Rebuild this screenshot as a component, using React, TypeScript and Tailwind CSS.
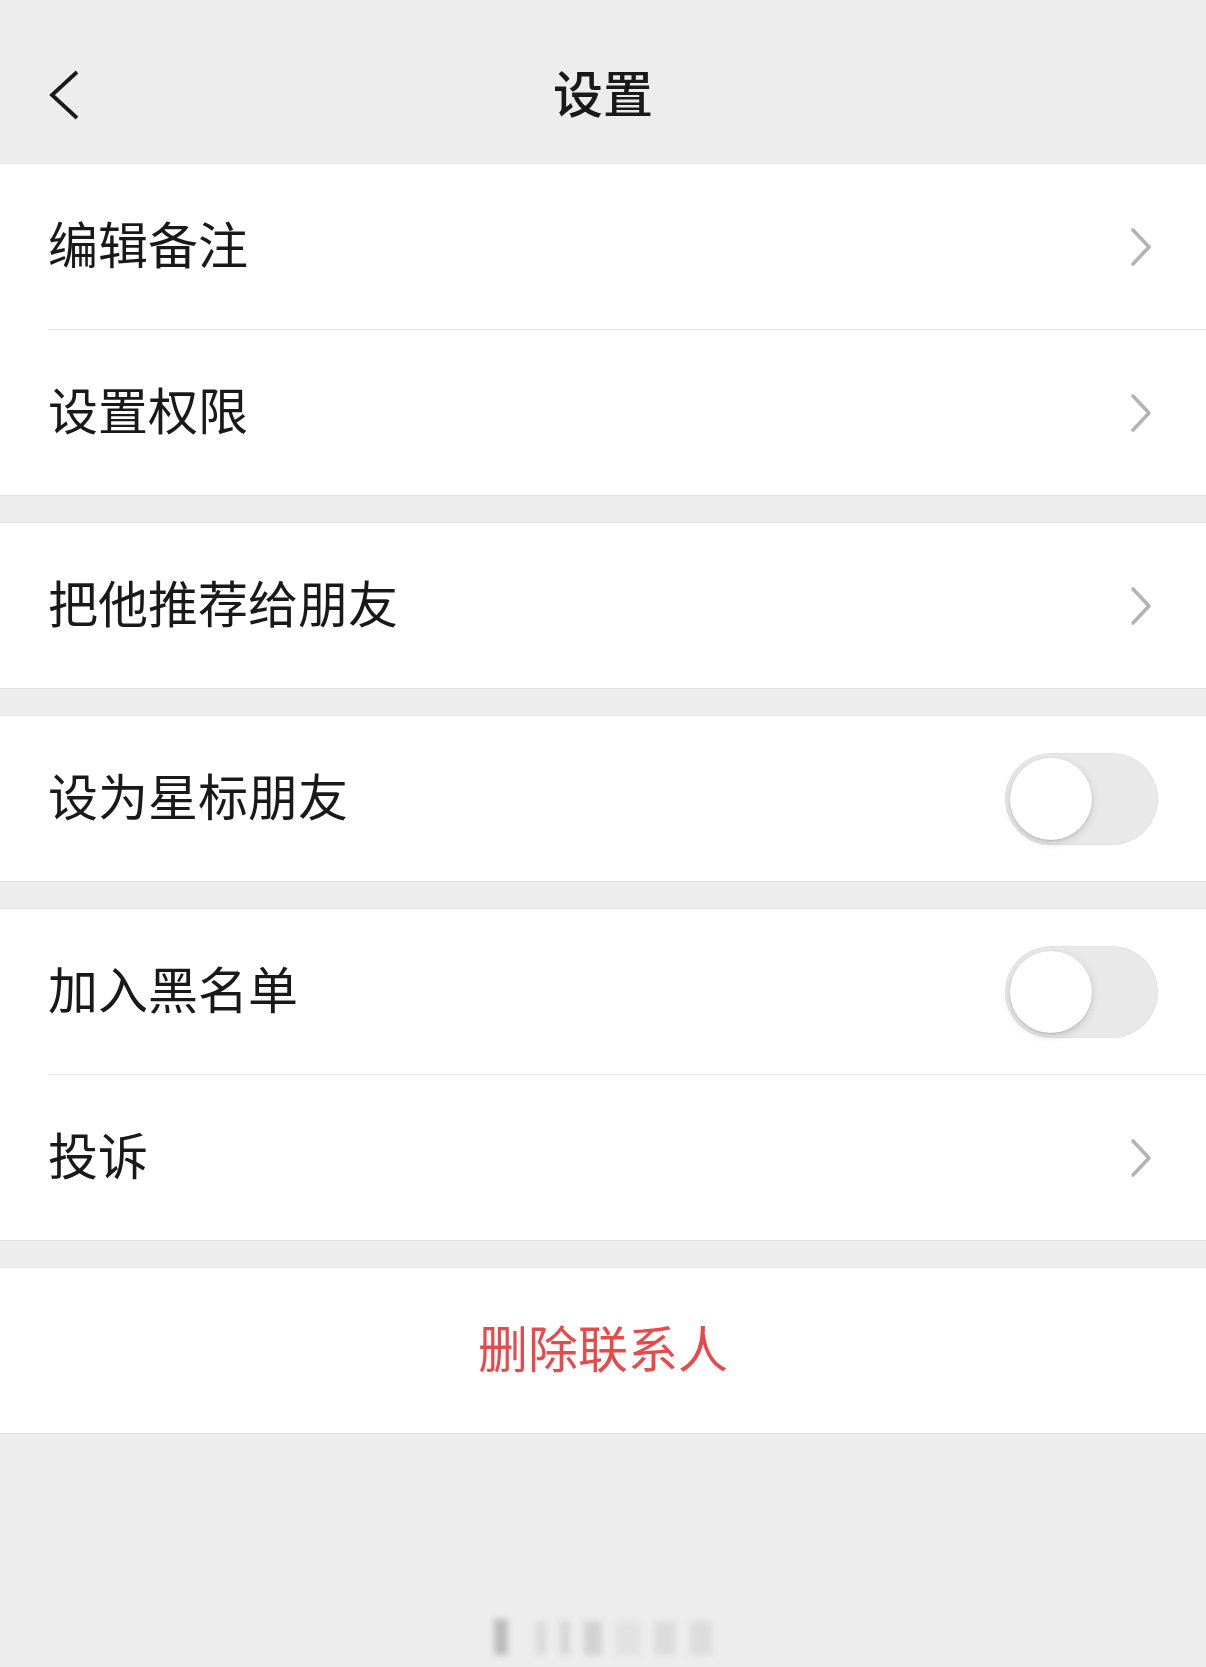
import React from "react";

function Chevron() {
  return (
    <svg width="24" height="42" viewBox="0 0 24 42" className="mr-[5px]">
      <path d="M4 4 L20 21 L4 38" fill="none" stroke="#b3b3b3" strokeWidth="3.6" strokeLinecap="round" strokeLinejoin="round" />
    </svg>
  );
}

function Toggle() {
  return (
    <div className="w-[153px] h-[92px] rounded-full bg-[#e9e9ea] p-[5px] flex items-center shadow-[inset_0_0_0_1px_rgba(0,0,0,0.03)]">
      <div className="w-[82px] h-[82px] rounded-full bg-white shadow-[0_3px_8px_rgba(0,0,0,0.15),0_1px_2px_rgba(0,0,0,0.12)]" />
    </div>
  );
}

function Row({ label, right }: { label: string; right: "chevron" | "toggle" }) {
  return (
    <div className="h-[165px] flex items-center justify-between pl-[48px] pr-[48px]">
      <span className="text-[50px] leading-none text-[#191919] mb-[9px]">{label}</span>
      {right === "chevron" ? <Chevron /> : <Toggle />}
    </div>
  );
}

function Divider() {
  return <div className="ml-[48px] border-t border-[#e5e5e5]" />;
}

export default function App() {
  return (
    <div className="min-h-[1667px] bg-[#ededed] font-['Noto_Sans_CJK_SC','Noto_Sans',sans-serif] flex flex-col">
      <header className="h-[163px] pt-[25px] grid grid-cols-[1fr_auto_1fr] items-center px-[48px]">
        <div className="flex items-center mt-[2px]">
          <svg width="32" height="52" viewBox="0 0 32 52">
            <path d="M29 3 L4 26 L29 49" fill="none" stroke="#1a1a1a" strokeWidth="3.8" strokeLinecap="butt" strokeLinejoin="miter" />
          </svg>
        </div>
        <h1 className="text-[50px] leading-none font-medium text-[#191919] mb-[6px]">设置</h1>
        <div />
      </header>

      <section className="bg-white border-y border-[#e0e0e0]">
        <Row label="编辑备注" right="chevron" />
        <Divider />
        <Row label="设置权限" right="chevron" />
      </section>

      <section className="mt-[26px] bg-white border-y border-[#e0e0e0]">
        <Row label="把他推荐给朋友" right="chevron" />
      </section>

      <section className="mt-[26px] bg-white border-y border-[#e0e0e0]">
        <Row label="设为星标朋友" right="toggle" />
      </section>

      <section className="mt-[26px] bg-white border-y border-[#e0e0e0]">
        <Row label="加入黑名单" right="toggle" />
        <Divider />
        <Row label="投诉" right="chevron" />
      </section>

      <section className="mt-[26px] bg-white border-y border-[#e0e0e0] h-[167px] flex items-center justify-center">
        <span className="text-[50px] leading-none text-[#e64a4a] mb-[9px]">删除联系人</span>
      </section>

      <div className="mt-[183px] flex justify-center">
        <div className="flex items-end gap-[14px] h-[38px] blur-[3px] ml-[-1px]">
          <div className="w-[14px] h-[36px] bg-[#bdbdbd]" />
          <div className="w-[10px] h-[34px] bg-[#dadada] ml-[14px]" />
          <div className="w-[10px] h-[34px] bg-[#d6d6d6]" />
          <div className="w-[18px] h-[34px] bg-[#d2d2d2]" />
          <div className="w-[24px] h-[34px] bg-[#e2e2e2]" />
          <div className="w-[22px] h-[34px] bg-[#dcdcdc]" />
          <div className="w-[22px] h-[34px] bg-[#dcdcdc]" />
        </div>
      </div>
    </div>
  );
}
